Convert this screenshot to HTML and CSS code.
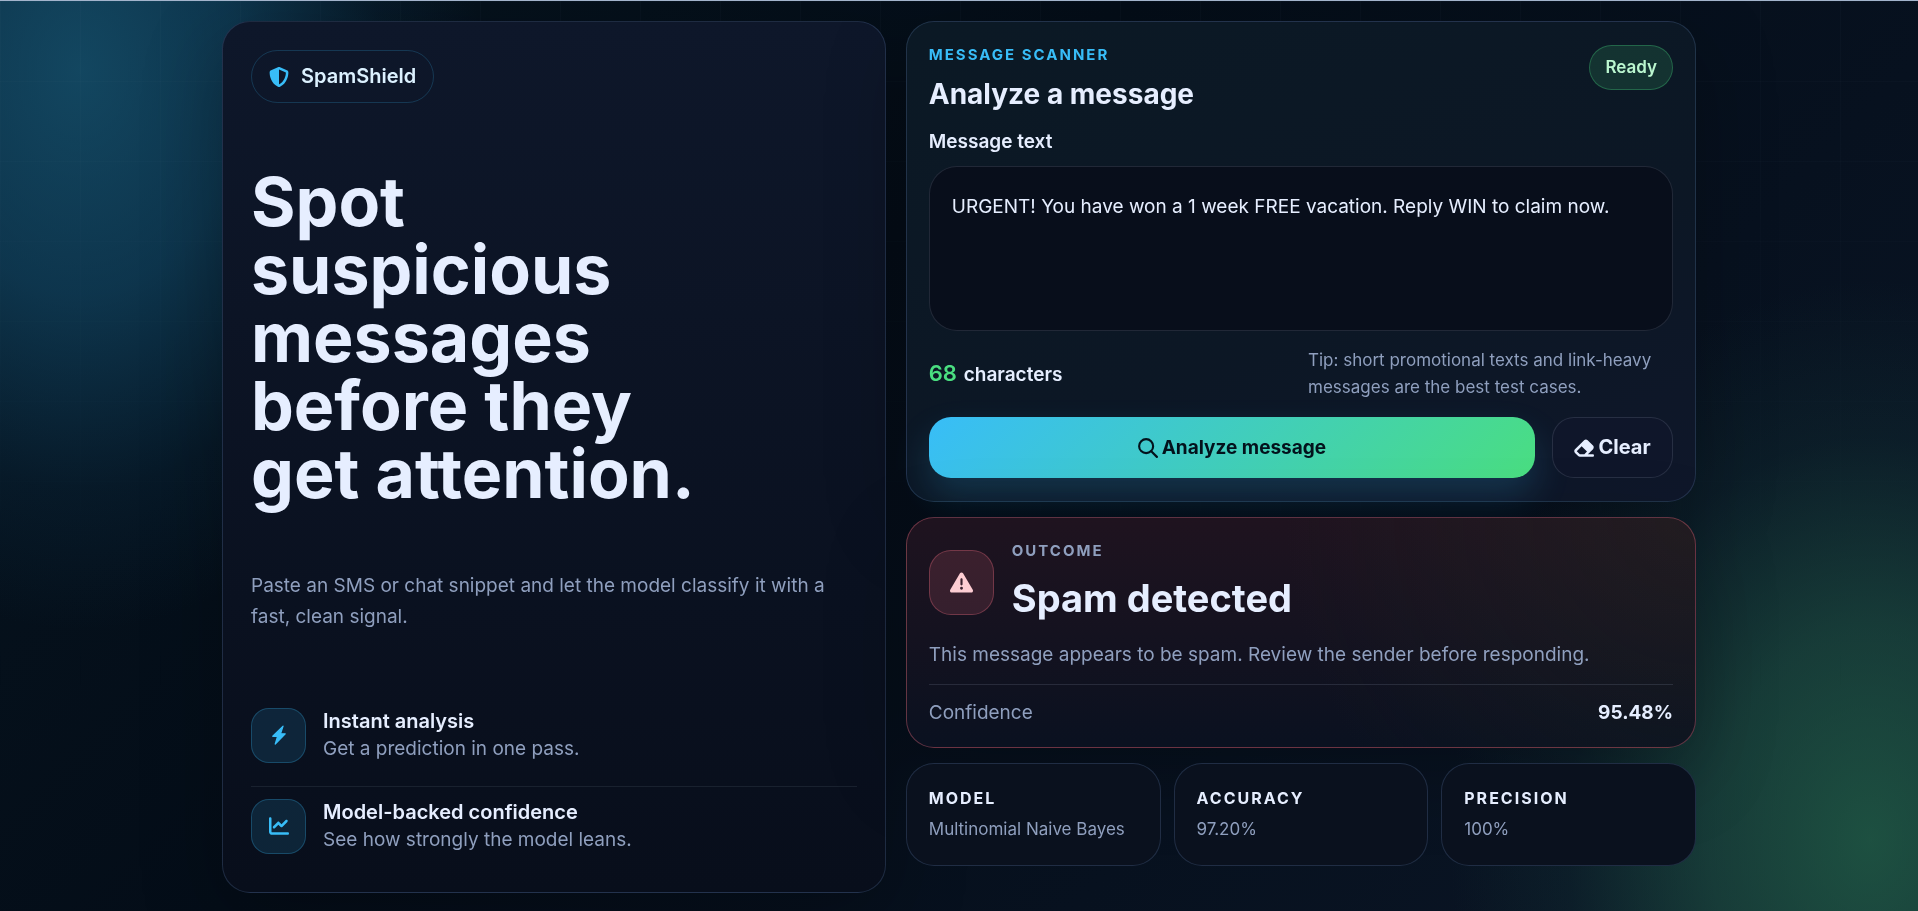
FILE: index.html
```html
<!DOCTYPE html>
<html lang="en">
<head>
<meta charset="UTF-8">
<meta name="viewport" content="width=device-width, initial-scale=1.0">
<title>SpamShield</title>
<link rel="stylesheet" href="styles.css">
</head>
<body>
<main class="page">
  <section class="panel hero">
    <div class="brand">
      <svg class="icon" viewBox="0 0 512 512" aria-hidden="true"><path fill-rule="evenodd" d="M256 0c4.6 0 9.2 1 13.4 2.9L457.7 82.8c22 9.3 38.4 31 38.3 57.2-.5 99.2-41.3 280.7-213.6 363.2-16.7 8-36.1 8-52.8 0C57.3 420.7 16.5 239.2 16 140c-.1-26.2 16.3-47.9 38.3-57.2L242.7 2.9C246.8 1 251.4 0 256 0zm0 66.8V444.8C394 378 431.1 230.1 432 141.4L256 66.8z"/></svg>
      <span>SpamShield</span>
    </div>
    <h1>Spot suspicious messages before they get attention.</h1>
    <p class="lead">Paste an SMS or chat snippet and let the model classify it with a fast, clean signal.</p>
    <ul class="features">
      <li>
        <span class="feature-icon">
          <svg class="icon" viewBox="0 0 16 16" aria-hidden="true"><path stroke="currentColor" stroke-linejoin="round" d="M11.251.9 9.2 7H13L5 15.200 6.900 9H3z"/></svg>
        </span>
        <div>
          <strong>Instant analysis</strong>
          <span>Get a prediction in one pass.</span>
        </div>
      </li>
      <li>
        <span class="feature-icon">
          <svg class="icon" viewBox="0 0 512 512" aria-hidden="true"><path d="M64 64c0-17.7-14.3-32-32-32S0 46.3 0 64V400c0 44.2 35.8 80 80 80H480c17.7 0 32-14.3 32-32s-14.3-32-32-32H80c-8.8 0-16-7.2-16-16V64zm406.6 86.6c12.5-12.5 12.5-32.8 0-45.3s-32.8-12.5-45.3 0L320 210.7l-57.4-57.4c-12.5-12.5-32.8-12.5-45.3 0l-112 112c-12.5 12.5-12.5 32.8 0 45.3s32.8 12.5 45.3 0L240 221.3l57.4 57.4c12.5 12.5 32.8 12.5 45.3 0l128-128z"/></svg>
        </span>
        <div>
          <strong>Model-backed confidence</strong>
          <span>See how strongly the model leans.</span>
        </div>
      </li>
    </ul>
  </section>

  <div class="workspace">
    <form class="panel scanner" onsubmit="return false">
      <header class="scanner-head">
        <div>
          <p class="eyebrow">Message scanner</p>
          <h2>Analyze a message</h2>
        </div>
        <span class="badge">Ready</span>
      </header>
      <label for="message">Message text</label>
      <textarea id="message" spellcheck="false">URGENT! You have won a 1 week FREE vacation. Reply WIN to claim now.</textarea>
      <div class="meta">
        <p class="counter"><span id="count">68</span> characters</p>
        <p class="tip">Tip: short promotional texts and link-heavy messages are the best test cases.</p>
      </div>
      <div class="actions">
        <button type="submit" class="btn btn-primary">
          <svg class="icon" viewBox="0 0 16 16" aria-hidden="true"><g fill="none" stroke="currentColor" stroke-width="1.7" stroke-linecap="round"><circle cx="6.5" cy="6.5" r="5.6"/><path d="M10.600 10.600 15.100 15.100"/></g></svg>
          Analyze message
        </button>
        <button type="button" class="btn btn-ghost" id="clear">
          <svg class="icon" viewBox="32 0 512 512" aria-hidden="true"><path d="M290.7 57.4L57.4 290.7c-25 25-25 65.5 0 90.5l80 80c12 12 28.3 18.7 45.3 18.7H512c17.7 0 32-14.3 32-32s-14.3-32-32-32H387.9L518.6 285.3c25-25 25-65.5 0-90.5L381.3 57.4c-25-25-65.5-25-90.5 0zM297.4 416H182.6l-80-80L227.3 211.3 364.7 348.7 297.4 416z"/></svg>
          Clear
        </button>
      </div>
    </form>

    <section class="panel result">
      <div class="result-head">
        <span class="result-icon">
          <svg class="icon" viewBox="0 0 512 512" aria-hidden="true"><path d="M256 32c14.2 0 27.3 7.5 34.5 19.8l216 368c7.3 12.4 7.3 27.7 .2 40.1S486.3 480 472 480H40c-14.3 0-27.6-7.7-34.7-20.1s-7-27.8 .2-40.1l216-368C228.7 39.5 241.8 32 256 32zm0 128c-13.3 0-24 10.7-24 24V296c0 13.3 10.7 24 24 24s24-10.7 24-24V184c0-13.3-10.7-24-24-24zm32 224a32 32 0 1 0-64 0 32 32 0 1 0 64 0z"/></svg>
        </span>
        <div>
          <p class="eyebrow muted">Outcome</p>
          <h2>Spam detected</h2>
        </div>
      </div>
      <p class="result-text">This message appears to be spam. Review the sender before responding.</p>
      <div class="confidence">
        <span>Confidence</span>
        <strong>95.48%</strong>
      </div>
    </section>

    <dl class="stats">
      <div class="stat">
        <dt>Model</dt>
        <dd>Multinomial Naive Bayes</dd>
      </div>
      <div class="stat">
        <dt>Accuracy</dt>
        <dd>97.20%</dd>
      </div>
      <div class="stat">
        <dt>Precision</dt>
        <dd>100%</dd>
      </div>
    </dl>
  </div>
</main>

<script>
const message = document.getElementById('message');
const count = document.getElementById('count');

message.addEventListener('input', function() {
  count.textContent = message.value.length;
});

document.getElementById('clear').addEventListener('click', function() {
  message.value = '';
  count.textContent = 0;
});
</script>
</body>
</html>
```
FILE: styles.css
```css
:root {
  --text: #e6eeff;
  --muted: #8f9fbe;
  --cyan: #38bdf8;
  --green: #4ade80;
  --line: rgba(120, 160, 220, 0.2);
}
* {
  box-sizing: border-box;
}
body {
  margin: 0;
  min-height: 100vh;
  border-top: 1px solid #a3b4cc;
  color: var(--text);
  font-family: Inter, "Liberation Sans", sans-serif;
  font-size: 19px;
  line-height: 27px;
  background:
    radial-gradient(ellipse 400px 560px at 80px 70px, rgba(24, 92, 124, 0.7), rgba(20, 82, 116, 0.55) 40%, rgba(14, 60, 90, 0.2) 75%, transparent),
    radial-gradient(ellipse 420px 560px at 1870px 840px, rgba(38, 108, 78, 0.68), rgba(36, 98, 76, 0.5) 38%, rgba(24, 70, 66, 0.2) 72%, transparent),
    linear-gradient(135deg, #06141f 0%, #040d18 40%, #07111f 70%, #0b1626 100%);
}
/* faint grid that fades out towards the bottom */
body::before {
  content: "";
  position: fixed;
  inset: 1px 0 0;
  z-index: -1;
  background-image:
    linear-gradient(rgba(148, 163, 184, 0.03) 1px, transparent 1px),
    linear-gradient(90deg, rgba(148, 163, 184, 0.03) 1px, transparent 1px);
  background-size: 80px 80px;
  -webkit-mask-image: linear-gradient(#000, transparent 80%);
  mask-image: linear-gradient(#000, transparent 80%);
}
h1, h2, p, ul, dl, dd {
  margin: 0;
}
.icon {
  width: 20px;
  height: 20px;
  fill: currentColor;
  flex: none;
}

.page {
  display: grid;
  grid-template-columns: minmax(0, 84fr) minmax(0, 100fr);
  gap: 20px;
  max-width: 1514px;
  margin: 0 auto;
  padding: 20px;
}
.panel {
  border: 1px solid var(--line);
  border-radius: 28px;
  background: linear-gradient(180deg, #0e172a, #080e1b);
  box-shadow: 0 24px 80px rgba(0, 0, 0, 0.25);
}

/* left side */
.hero {
  display: flex;
  flex-direction: column;
  justify-content: space-between;
  min-height: calc(100vh - 39px);
  padding: 28px 28px 27px;
}
.brand {
  display: flex;
  align-items: center;
  align-self: flex-start;
  gap: 12px;
  padding: 12px 17px;
  border: 1px solid rgba(56, 189, 248, 0.2);
  border-radius: 27px;
  color: #dcf1ff;
  font-size: 20px;
  font-weight: 600;
}
.brand .icon {
  color: var(--cyan);
}
h1 {
  max-width: 500px;
  font-size: 68px;
  font-weight: 700;
  line-height: 68px;
}
.lead {
  max-width: 600px;
  color: var(--muted);
  line-height: 31px;
}
.features {
  display: grid;
  gap: 12px;
  padding: 0;
  list-style: none;
}
.features li {
  display: flex;
  gap: 17px;
  padding: 12px 0 11px;
}
.features li + li {
  border-top: 1px solid rgba(148, 163, 184, 0.12);
}
.features strong,
.features div span {
  display: block;
}
.features strong {
  font-size: 20px;
  font-weight: 600;
}
.features div span {
  color: var(--muted);
}
.feature-icon,
.result-icon {
  display: grid;
  place-items: center;
  flex: none;
}
.feature-icon {
  width: 55px;
  height: 55px;
  border: 1px solid rgba(56, 189, 248, 0.25);
  border-radius: 18px;
  background: rgba(56, 189, 248, 0.13);
  color: var(--cyan);
}

/* right side */
.workspace {
  display: grid;
  align-content: start;
  gap: 15px;
}
.scanner {
  padding: 23px 22px;
  background: linear-gradient(160deg, #0b1925, #0c1725 60%, #0f172a);
}
.scanner-head {
  display: flex;
  justify-content: space-between;
  align-items: flex-start;
}
.eyebrow {
  color: var(--cyan);
  font-size: 15px;
  font-weight: 700;
  line-height: 20px;
  letter-spacing: 2px;
  text-transform: uppercase;
}
.eyebrow.muted {
  color: var(--muted);
}
.scanner h2 {
  margin-top: 11px;
  font-size: 28px;
  line-height: 36px;
}
.badge {
  padding: 8px 15px;
  border: 1px solid rgba(74, 222, 128, 0.3);
  border-radius: 23px;
  background: rgba(74, 222, 128, 0.14);
  color: #bbf7d0;
  font-size: 17px;
  font-weight: 600;
}
.scanner label {
  display: block;
  margin: 16px 0 11px;
  font-weight: 600;
}
textarea {
  display: block;
  width: 100%;
  height: 165px;
  padding: 22px;
  border: 1px solid rgba(148, 163, 184, 0.18);
  border-radius: 28px;
  background: #080e1b;
  color: var(--text);
  font: inherit;
  line-height: 35px;
  resize: none;
}
.meta {
  display: flex;
  justify-content: space-between;
  align-items: center;
  gap: 20px;
  margin: 16px 0;
}
.counter {
  font-weight: 600;
}
.counter span {
  margin-right: 2px;
  color: var(--green);
  font-size: 22px;
}
.tip {
  width: 365px;
  color: var(--muted);
  font-size: 17px;
}
.actions {
  display: flex;
  gap: 17px;
}
.btn {
  display: flex;
  align-items: center;
  justify-content: center;
  gap: 4px;
  height: 61px;
  border: 1px solid transparent;
  border-radius: 22px;
  font: inherit;
  font-weight: 700;
  cursor: pointer;
}
.btn-primary {
  flex: 1;
  border: 0;
  background: linear-gradient(135deg, var(--cyan), var(--green));
  box-shadow: 0 18px 36px rgba(56, 189, 248, 0.18);
  color: #03121c;
}
.btn-ghost {
  width: 121px;
  border-color: rgba(148, 163, 184, 0.18);
  background: #0f162a;
  color: var(--text);
  font-size: 20px;
}

.result {
  padding: 23px 22px 19px;
  border-color: rgba(251, 113, 133, 0.35);
  background:
    radial-gradient(circle at 100% 0, rgba(40, 48, 36, 0.3), transparent 50%),
    linear-gradient(180deg, #1f131f, #0a1120);
}
.result-head {
  display: flex;
  align-items: center;
  gap: 18px;
}
.result-icon {
  width: 65px;
  height: 65px;
  border: 1px solid rgba(251, 113, 133, 0.3);
  border-radius: 22px;
  background: rgba(251, 113, 133, 0.14);
  color: #fecdd3;
}
.result-icon .icon {
  width: 23px;
  height: 23px;
}
.result h2 {
  margin-top: 12px;
  font-size: 38px;
  line-height: 50px;
}
.result-text {
  margin: 16px 0 14px;
  color: var(--muted);
  line-height: 31px;
}
.confidence {
  display: flex;
  justify-content: space-between;
  padding-top: 12px;
  border-top: 1px solid rgba(148, 163, 184, 0.18);
  line-height: 31px;
}
.confidence span {
  color: var(--muted);
}

.stats {
  display: grid;
  grid-template-columns: repeat(3, minmax(0, 1fr));
  gap: 13px;
}
.stat {
  padding: 22px;
  border: 1px solid var(--line);
  border-radius: 28px;
  background: #0a111e;
}
.stat dt {
  font-size: 16px;
  font-weight: 700;
  line-height: 24px;
  letter-spacing: 2px;
  text-transform: uppercase;
}
.stat dd {
  margin-top: 6px;
  color: var(--muted);
  font-size: 17px;
}
```
